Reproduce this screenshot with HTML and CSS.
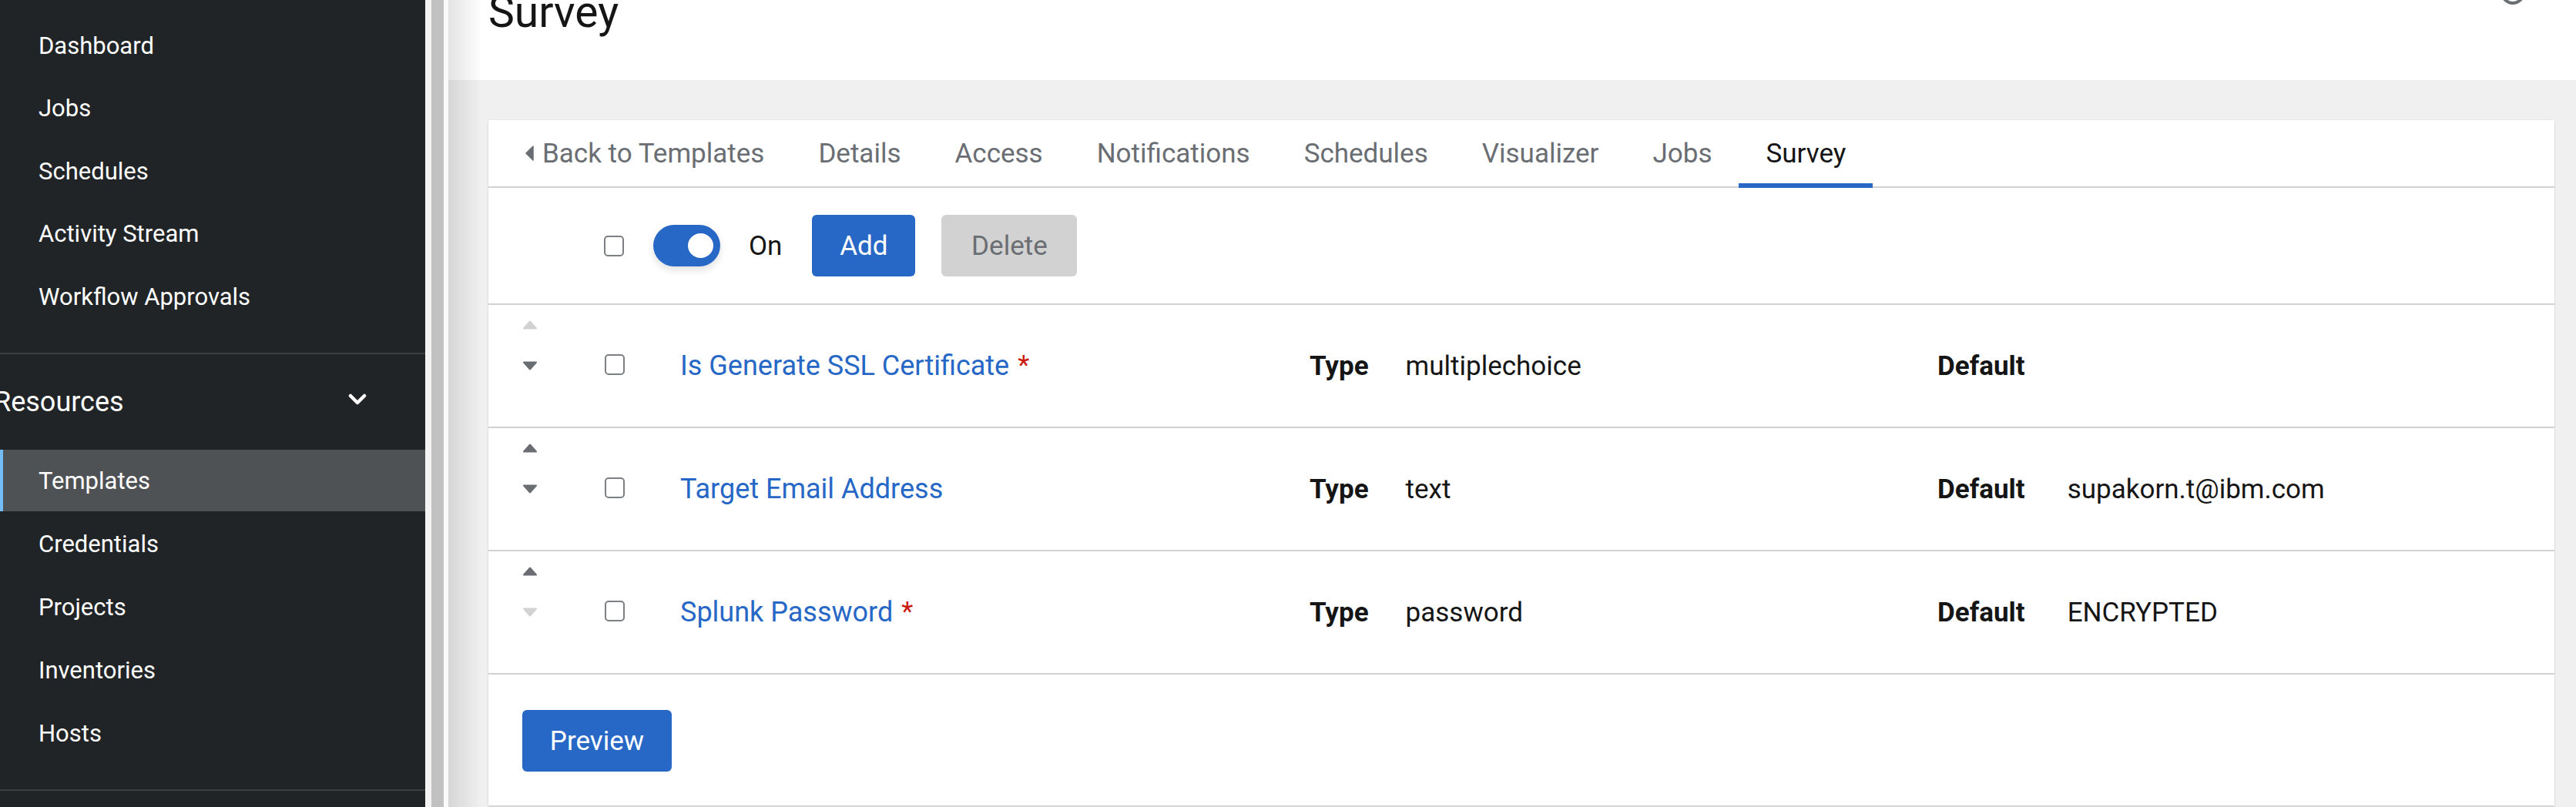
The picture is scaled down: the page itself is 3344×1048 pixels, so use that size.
FILE: index.html
```html
<!DOCTYPE html>
<html lang="en">
<head>
<meta charset="utf-8">
<title>Survey</title>
<link rel="stylesheet" href="styles.css">
</head>
<body>
<div class="app">
  <nav class="sidebar">
    <ul class="nav-list nav-top">
      <li class="nav-item">Dashboard</li>
      <li class="nav-item">Jobs</li>
      <li class="nav-item">Schedules</li>
      <li class="nav-item">Activity Stream</li>
      <li class="nav-item">Workflow Approvals</li>
    </ul>
    <div class="nav-sep"></div>
    <div class="nav-group">
      <div class="nav-group-title">
        <span>Resources</span>
        <svg class="chevron" width="24" height="16" viewBox="0 0 24 16"><polyline points="3,3 12,12 21,3" fill="none" stroke="#fff" stroke-width="4.5" stroke-linecap="round" stroke-linejoin="round"/></svg>
      </div>
      <ul class="nav-list nav-sub">
        <li class="nav-item active">Templates</li>
        <li class="nav-item">Credentials</li>
        <li class="nav-item">Projects</li>
        <li class="nav-item">Inventories</li>
        <li class="nav-item">Hosts</li>
      </ul>
    </div>
    <div class="nav-sep"></div>
  </nav>
  <div class="scrolltrack"></div>
  <main class="main">
    <header class="page-header">
      <h1 class="page-title">Survey</h1>
      <svg class="help-icon" width="34" height="34" viewBox="0 0 34 34"><circle cx="17" cy="17" r="14" fill="none" stroke="#6a6e73" stroke-width="4"/></svg>
    </header>
    <section class="page-body">
      <div class="card">
        <div class="tabs">
          <div class="tab tab-back">
            <svg class="back-caret" width="11" height="20" viewBox="0 0 11 20"><polygon points="10,1 10,19 1,10" fill="#6a6e73" stroke="#6a6e73" stroke-width="1.5" stroke-linejoin="round"/></svg>
            <span>Back to Templates</span>
          </div>
          <div class="tab">Details</div>
          <div class="tab">Access</div>
          <div class="tab">Notifications</div>
          <div class="tab">Schedules</div>
          <div class="tab">Visualizer</div>
          <div class="tab">Jobs</div>
          <div class="tab active">Survey</div>
        </div>

        <div class="toolbar">
          <span class="checkbox"></span>
          <span class="switch"></span>
          <span class="switch-label">On</span>
          <button class="btn btn-primary btn-add">Add</button>
          <button class="btn btn-disabled btn-delete">Delete</button>
        </div>

        <div class="survey-list">
          <div class="survey-row">
            <div class="arrows">
              <svg class="arrow disabled" width="20" height="12" viewBox="0 0 20 12"><polygon points="2,10.5 18,10.5 10,1.5"/></svg>
              <svg class="arrow" width="20" height="12" viewBox="0 0 20 12"><polygon points="2,1.5 18,1.5 10,10.5"/></svg>
            </div>
            <div class="cell-check"><span class="checkbox"></span></div>
            <div class="cell-name"><a class="q-link">Is Generate SSL Certificate</a><span class="required">*</span></div>
            <div class="cell-pair pair-type"><b class="pair-label">Type</b><span>multiplechoice</span></div>
            <div class="cell-pair pair-default"><b class="pair-label">Default</b><span></span></div>
          </div>
          <div class="survey-row">
            <div class="arrows">
              <svg class="arrow" width="20" height="12" viewBox="0 0 20 12"><polygon points="2,10.5 18,10.5 10,1.5"/></svg>
              <svg class="arrow" width="20" height="12" viewBox="0 0 20 12"><polygon points="2,1.5 18,1.5 10,10.5"/></svg>
            </div>
            <div class="cell-check"><span class="checkbox"></span></div>
            <div class="cell-name"><a class="q-link">Target Email Address</a></div>
            <div class="cell-pair pair-type"><b class="pair-label">Type</b><span>text</span></div>
            <div class="cell-pair pair-default"><b class="pair-label">Default</b><span>supakorn.t@ibm.com</span></div>
          </div>
          <div class="survey-row">
            <div class="arrows">
              <svg class="arrow" width="20" height="12" viewBox="0 0 20 12"><polygon points="2,10.5 18,10.5 10,1.5"/></svg>
              <svg class="arrow disabled" width="20" height="12" viewBox="0 0 20 12"><polygon points="2,1.5 18,1.5 10,10.5"/></svg>
            </div>
            <div class="cell-check"><span class="checkbox"></span></div>
            <div class="cell-name"><a class="q-link">Splunk Password</a><span class="required">*</span></div>
            <div class="cell-pair pair-type"><b class="pair-label">Type</b><span>password</span></div>
            <div class="cell-pair pair-default"><b class="pair-label">Default</b><span>ENCRYPTED</span></div>
          </div>
        </div>

        <div class="card-footer">
          <button class="btn btn-primary btn-preview">Preview</button>
        </div>
      </div>
    </section>
  </main>
</div>
</body>
</html>
```
FILE: styles.css
```css
* { box-sizing: border-box; }

html, body {
  margin: 0;
  padding: 0;
  width: 3344px;
  height: 1048px;
  overflow: hidden;
  font-family: Roboto, "Liberation Sans", sans-serif;
  color: #151515;
  background: #f0f0f0;
}

.app {
  display: flex;
  width: 3344px;
  height: 1048px;
}

/* ---------- Sidebar ---------- */
.sidebar {
  width: 552px;
  flex-shrink: 0;
  background: #212427;
  padding-top: 19px;
  overflow: hidden;
}

.nav-list {
  list-style: none;
  margin: 0;
  padding: 0;
}

.nav-top { margin-bottom: 33px; }
.nav-top .nav-item { margin-bottom: 1.6px; }
.nav-sub { margin-bottom: 33px; }

.nav-item {
  height: 80px;
  margin-bottom: 2px;
  display: flex;
  align-items: center;
  padding-left: 50px;
  color: #ffffff;
  font-size: 31px;
  white-space: nowrap;
}

.nav-item.active {
  background: #4f5255;
  box-shadow: inset 4px 0 0 #73bcf7;
}

.nav-sep {
  height: 2px;
  background: #3c3f42;
}

.nav-group-title {
  height: 124px;
  display: flex;
  align-items: center;
  justify-content: space-between;
  margin-left: -8px;
  padding-right: 76px;
  color: #ffffff;
  font-size: 36px;
}

.chevron { margin-top: -6px; }

/* ---------- scroll track between sidebar and main ---------- */
.scrolltrack {
  width: 30px;
  flex-shrink: 0;
  background: linear-gradient(to right, #f3f3f3 0, #f3f3f3 8px, #c1c1c1 8px, #c1c1c1 24px, #fafafa 24px, #fafafa 30px);
}

/* ---------- Main ---------- */
.main {
  flex: 1;
  display: flex;
  flex-direction: column;
  position: relative;
  background: #f0f0f0;
  min-width: 0;
}

.main::before {
  content: "";
  position: absolute;
  left: 0;
  top: 0;
  bottom: 0;
  width: 44px;
  background: linear-gradient(to right, rgba(0,0,0,0.11), rgba(0,0,0,0));
  pointer-events: none;
  z-index: 2;
}

.page-header {
  height: 104px;
  flex-shrink: 0;
  background: #ffffff;
  display: flex;
  justify-content: space-between;
  align-items: flex-start;
  padding-left: 52px;
  padding-right: 65px;
}

.page-title {
  margin: -13px 0 0 0;
  font-size: 57px;
  line-height: 1;
  font-weight: 400;
  color: #151515;
}

.help-icon {
  margin-top: -27px;
}

.page-body {
  flex: 1;
  padding: 52px 28px 0 52px;
}

.card {
  height: 890px;
  background: #ffffff;
  box-shadow: 0 2px 2px rgba(0,0,0,0.12), 0 0 2px rgba(0,0,0,0.08);
  display: flex;
  flex-direction: column;
}

/* ---------- Tabs ---------- */
.tabs {
  height: 88px;
  flex-shrink: 0;
  display: flex;
  border-bottom: 2px solid #d2d2d2;
  padding-left: 13px;
}

.tab {
  position: relative;
  display: flex;
  align-items: center;
  padding: 0 35px;
  font-size: 35px;
  color: #6a6e73;
  white-space: nowrap;
}

.back-caret { margin-right: 11px; }

.tab.active { color: #151515; }

.tab.active::after {
  content: "";
  position: absolute;
  left: 0;
  right: 0;
  bottom: -2px;
  height: 6px;
  background: #2767c6;
}

/* ---------- Toolbar ---------- */
.toolbar {
  height: 152px;
  flex-shrink: 0;
  display: flex;
  align-items: center;
  padding-left: 150px;
  border-bottom: 2px solid #d2d2d2;
}

.checkbox {
  display: inline-block;
  width: 26px;
  height: 27px;
  border: 2.5px solid #7c7f83;
  border-radius: 5px;
  background: #ffffff;
}

.switch {
  position: relative;
  margin-left: 38px;
  width: 87px;
  height: 54px;
  border-radius: 27px;
  background: #2767c6;
  box-shadow: 0 5px 10px rgba(0,0,0,0.12);
}

.switch::after {
  content: "";
  position: absolute;
  right: 9px;
  top: 11px;
  width: 33px;
  height: 32px;
  border-radius: 50%;
  background: #ffffff;
}

.switch-label {
  margin-left: 37px;
  font-size: 35px;
  color: #151515;
}

.btn {
  height: 80px;
  border: none;
  border-radius: 6px;
  font-family: Roboto, "Liberation Sans", sans-serif;
  font-size: 35px;
  padding: 0;
}

.btn-primary {
  background: #2767c6;
  color: #ffffff;
}

.btn-disabled {
  background: #d2d2d2;
  color: #6a6e73;
}

.btn-add { margin-left: 39px; width: 134px; }
.btn-delete { margin-left: 34px; width: 176px; }

/* ---------- Rows ---------- */
.survey-row {
  height: 160px;
  display: grid;
  grid-template-columns: 107px 98px 817px 815px 1fr;
  align-items: center;
  padding-left: 44px;
  border-bottom: 2px solid #d2d2d2;
  font-size: 35px;
}

.arrows {
  display: flex;
  flex-direction: column;
  gap: 41px;
  padding-bottom: 53px;
}

.arrow {
  display: block;
  fill: #6a6e73;
  stroke: #6a6e73;
  stroke-width: 2;
  stroke-linejoin: round;
}

.arrow.disabled {
  fill: #d2d2d2;
  stroke: #d2d2d2;
}

.cell-check {
  display: flex;
  align-items: center;
  margin-top: -4px;
}

.cell-name {
  display: flex;
  align-items: flex-start;
  white-space: nowrap;
}

.q-link {
  color: #2767c6;
  text-decoration: none;
  font-size: 36px;
}

.required {
  color: #c9190b;
  margin-left: 11px;
  font-size: 35px;
}

.cell-pair {
  display: flex;
  white-space: nowrap;
}

.pair-type { gap: 48px; }
.pair-default { gap: 55px; }

.pair-label {
  font-weight: 700;
}

/* ---------- Footer ---------- */
.card-footer {
  flex: 1;
  padding: 46px 0 0 44px;
}

.btn-preview { width: 194px; }
```
